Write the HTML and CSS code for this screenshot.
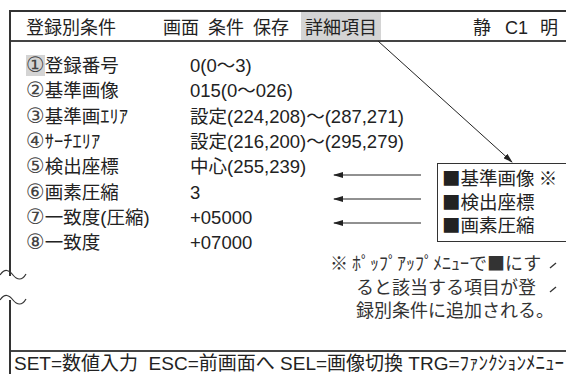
FILE: index.html
```html
<!DOCTYPE html>
<html>
<head>
  <title>登録別条件</title>
  <link rel="stylesheet" href="styles.css">
</head>
<body>
  <div class="screen">
    <div class="hdr">
      <span class="title">登録別条件</span>
      <span class="menu">画面</span>
      <span class="menu">条件</span>
      <span class="menu">保存</span>
      <span class="menu sel">詳細項目</span>
      <span class="mode">静</span>
      <span class="cam">C1 明</span>
    </div>
    <div class="main">
      <div class="rows">
        <div class="row"><span class="lbl"><span class="num cur">①</span>登録番号</span><span class="val">0(0～3)</span></div>
        <div class="row"><span class="lbl"><span class="num">②</span>基準画像</span><span class="val">015(0～026)</span></div>
        <div class="row"><span class="lbl"><span class="num">③</span>基準画ｴﾘｱ</span><span class="val">設定(224,208)～(287,271)</span></div>
        <div class="row"><span class="lbl"><span class="num">④</span>ｻｰﾁｴﾘｱ</span><span class="val">設定(216,200)～(295,279)</span></div>
        <div class="row"><span class="lbl"><span class="num">⑤</span>検出座標</span><span class="val">中心(255,239)</span></div>
        <div class="row"><span class="lbl"><span class="num">⑥</span>画素圧縮</span><span class="val">3</span></div>
        <div class="row"><span class="lbl"><span class="num">⑦</span>一致度(圧縮)</span><span class="val">+05000</span></div>
        <div class="row"><span class="lbl"><span class="num">⑧</span>一致度</span><span class="val">+07000</span></div>
      </div>
      <div class="note">
        <div class="n1">※ ﾎﾟｯﾌﾟｱｯﾌﾟﾒﾆｭｰで■にす</div>
        <div>ると該当する項目が登</div>
        <div>録別条件に追加される。</div>
      </div>
      <div class="popup">
        <div>■基準画像 ※</div>
        <div>■検出座標</div>
        <div>■画素圧縮</div>
      </div>
    </div>
    <div class="ftr">SET=数値入力&nbsp; ESC=前画面へ SEL=画像切換 TRG=ﾌｧﾝｸｼｮﾝﾒﾆｭｰ</div>
  </div>

  <svg class="marks" width="566" height="374" viewBox="0 0 566 374">
    <defs>
      <marker id="ah" markerWidth="10" markerHeight="6" refX="9" refY="3" orient="auto" markerUnits="userSpaceOnUse">
        <path d="M0,0 L10,3 L0,6 Z" fill="#222"/>
      </marker>
    </defs>
    <line x1="378" y1="41" x2="512" y2="162" stroke="#222" stroke-width="1" marker-end="url(#ah)"/>
    <line x1="421" y1="175" x2="334" y2="175" stroke="#222" stroke-width="1" marker-end="url(#ah)"/>
    <line x1="421" y1="199" x2="334" y2="199" stroke="#222" stroke-width="1" marker-end="url(#ah)"/>
    <line x1="421" y1="223" x2="334" y2="223" stroke="#222" stroke-width="1" marker-end="url(#ah)"/>
    <rect x="7" y="276" width="6" height="24" fill="#fff"/>
    <path d="M0,275 C5,268 9,270 13,275 S22,281 26,274" fill="none" stroke="#333" stroke-width="1.2"/>
    <path d="M0,300 C5,293 9,295 13,300 S22,306 26,299" fill="none" stroke="#333" stroke-width="1.2"/>
    <path d="M550,268 L556,263" stroke="#333" stroke-width="1.3"/>
    <path d="M550,292 L556,287" stroke="#333" stroke-width="1.3"/>
  </svg>
</body>
</html>
```

FILE: styles.css
```css
body { margin: 0; background: #fff; color: #222; font-family: "Liberation Sans", "Noto Sans CJK JP", sans-serif; overflow: hidden; }

.screen { margin: 10px 0 0 9px; width: 600px; height: 364px; border-top: 2px solid #333; border-left: 2px solid #333; display: flex; flex-direction: column; }

.hdr { height: 28px; display: flex; align-items: stretch; border-bottom: 2px solid #444; font-size: 18px; }
.hdr span { display: flex; align-items: center; }
.title { margin-left: 15px; width: 137px; }
.menu { margin-right: 9px; }
.menu.sel { background: #d4d4d4; padding: 0 4px; margin-left: 3px; margin-right: 0; }
.mode { margin-left: 92px; }
.cam { margin-left: 14px; word-spacing: 7px; }

.main { position: relative; flex: 1; }
.rows { padding: 11px 0 0 15px; display: flex; flex-direction: column; }
.row { display: flex; height: 25.3px; align-items: center; font-size: 18.5px; line-height: 21px; }
.lbl { width: 164px; display: flex; align-items: center; }
.num { font-family: "DejaVu Sans", sans-serif; font-size: 21px; line-height: 21px; color: #444; }
.cur { background: #d4d4d4; }

.note { margin: -4px 0 0 319px; font-family: "Noto Sans CJK JP", sans-serif; font-size: 18px; line-height: 23.5px; color: #333; white-space: nowrap; }
.note div { padding-left: 26px; }
.note .n1 { padding-left: 0; }

.popup { position: absolute; left: 426px; top: 121px; width: 180px; border: 1px solid #333; padding: 2px 0 4px 4px; font-size: 18.5px; line-height: 23.5px; background: #fff; font-family: "Noto Sans CJK JP", sans-serif; }

.ftr { height: 24px; border-top: 2px solid #444; font-size: 19px; line-height: 24px; padding-left: 3px; white-space: nowrap; }

.marks { position: absolute; left: 0; top: 0; pointer-events: none; }
```
